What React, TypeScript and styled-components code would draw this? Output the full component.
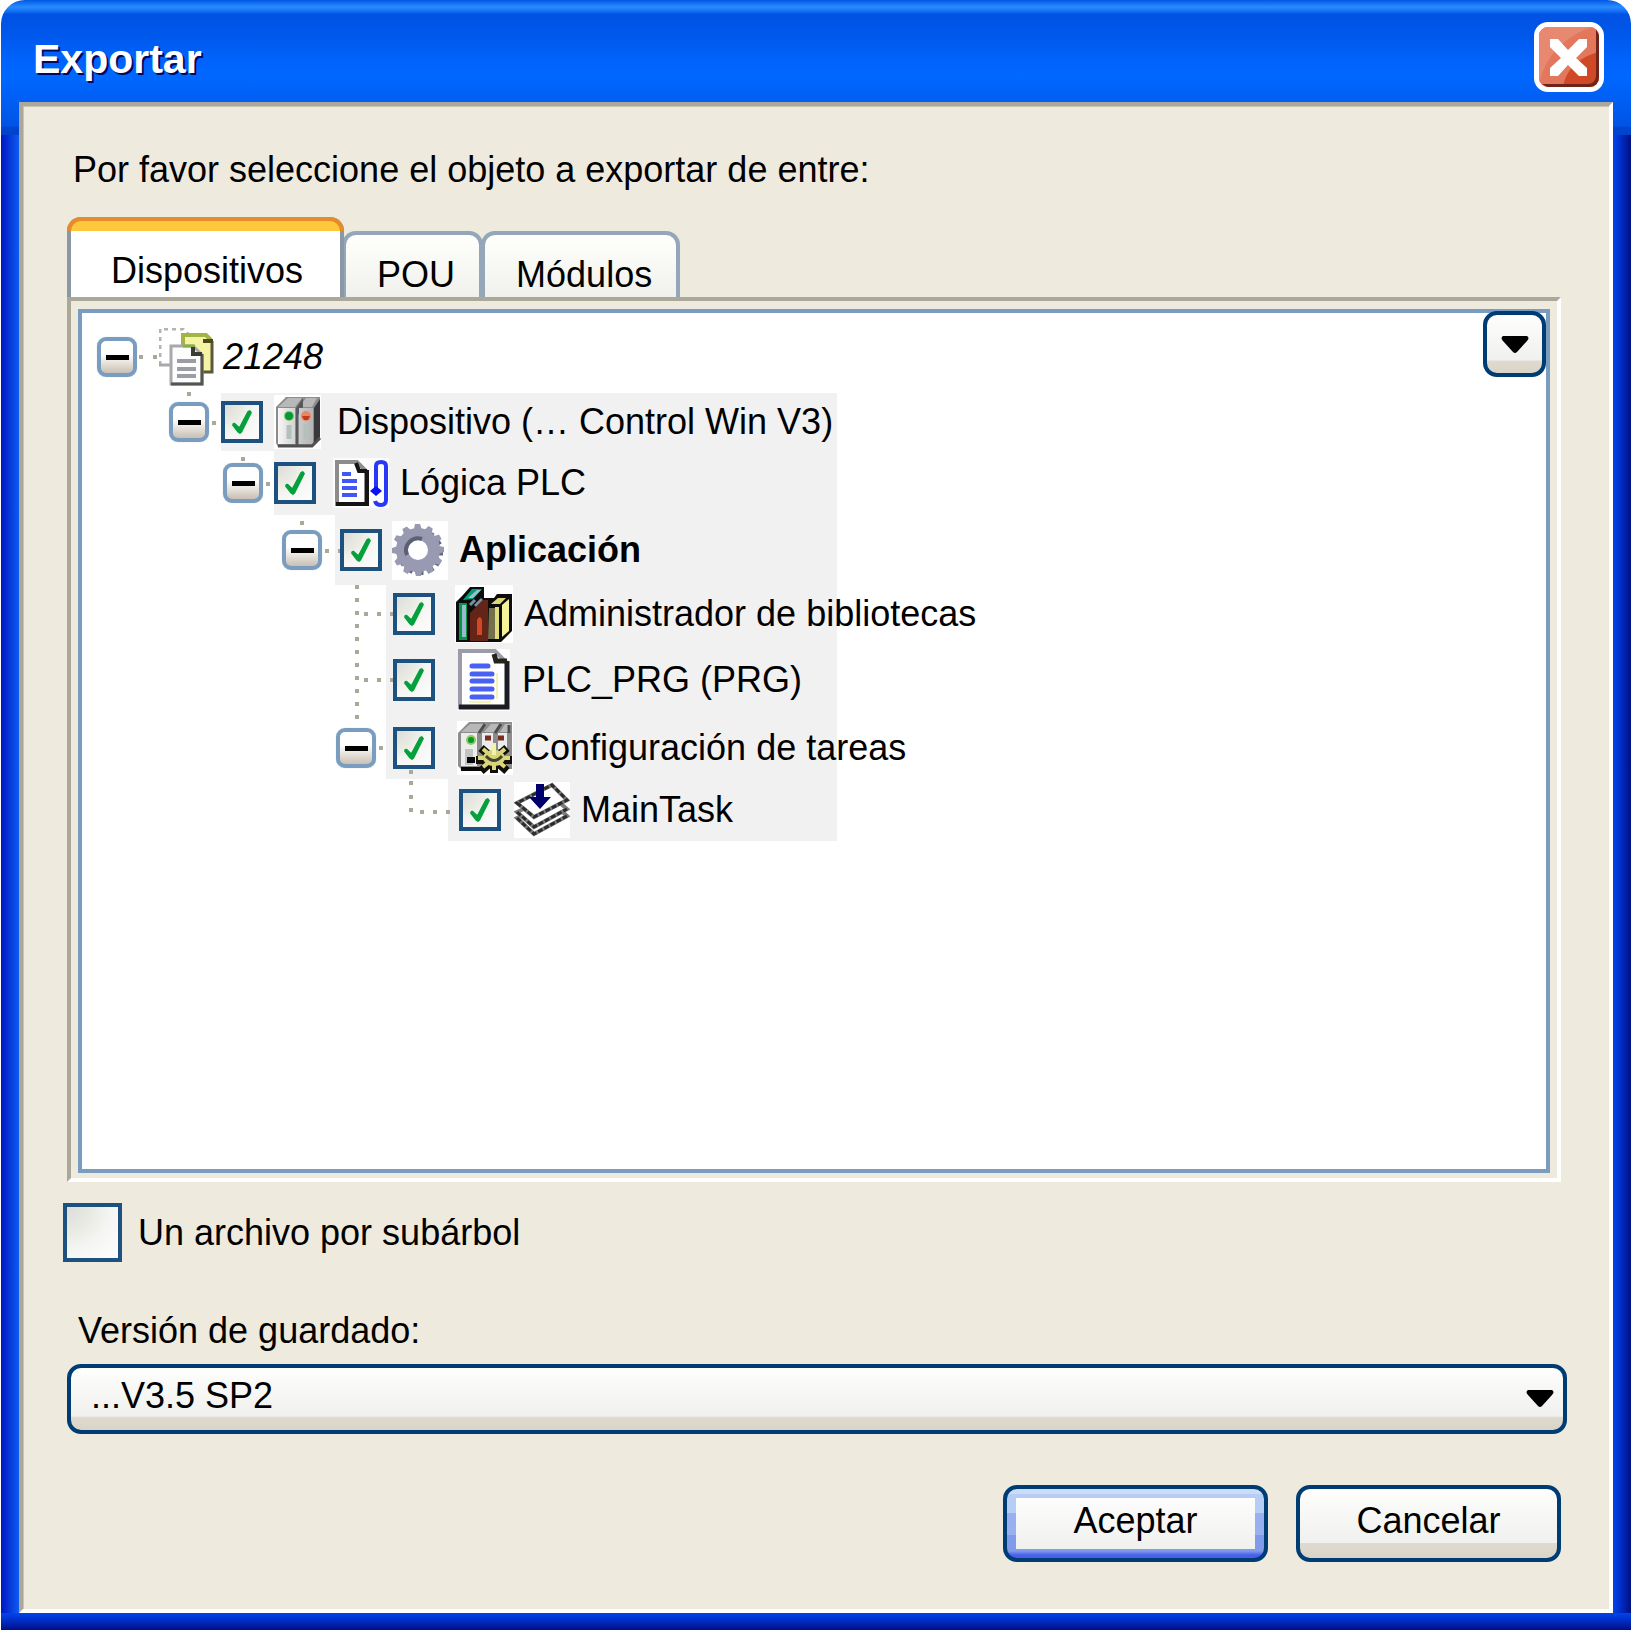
import React, { useState } from 'react';
import styled, { createGlobalStyle, css } from 'styled-components';

const NAVY = '#003c74';
const TAN = '#aca899';
const CREAM = '#eeeade';
const STEEL = '#7a9dbf';

const GlobalStyle = createGlobalStyle`
  *, *::before { box-sizing: border-box; }
  body {
    margin: 0;
    background: #fff;
    color: #000;
    font-family: "Liberation Sans Narrow", "Arial Narrow", "Liberation Sans", Arial, sans-serif;
    font-size: 36px;
    line-height: 52px;
  }
  button, input, select { font: inherit; color: inherit; margin: 0; }
`;

const Window = styled.main`
  display: flex;
  flex-direction: column;
  min-height: calc(100vh - 1px);
  margin: 0 0 1px 1px;
  padding: 0 18px 17px;
  border-radius: 24px 24px 0 0;
  background:
    linear-gradient(to bottom, #0058e6 0, #2a8cff 7px, #0f6af2 12px, #0052e2 14px, #0058ec 36px, #0062fa 58px, #0068ff 76px, #0060f6 96px, #0054e6 126px, #0046d2 127px, #0042cc 135px) top / 100% 135px no-repeat,
    linear-gradient(to bottom, #0044ee, #0024b4 60%, #000f8a) bottom / 100% 17px no-repeat,
    linear-gradient(to right, #0016c4, #0c5cf0) left / 18px 100% no-repeat,
    linear-gradient(to right, #0044ee, #0024b4 60%, #000f80) right / 18px 100% no-repeat;
`;

const TitleBar = styled.header`
  display: flex;
  align-items: center;
  justify-content: space-between;
  height: 102px;
  padding: 12px 9px 0 14px;
`;

const Title = styled.h1`
  margin: 0;
  padding-top: 4px;
  font-size: 41px;
  line-height: 60px;
  font-weight: bold;
  color: #fff;
  text-shadow: 2px 2px 0 #000a60;
`;

const CloseButton = styled.button`
  display: flex;
  width: 70px;
  height: 70px;
  padding: 0;
  overflow: hidden;
  border: 5px solid #fff;
  border-radius: 14px;
  background: #e2775c;
`;

const Client = styled.section`
  flex: 1;
  display: flex;
  flex-direction: column;
  padding: 38px 42px 47px 40px;
  border: 4px solid;
  border-color: ${TAN} #fff #fff ${TAN};
  box-shadow: inset 1px 1px 0 #c9c4b5;
  background: ${CREAM};
`;

const Prompt = styled.p`
  margin: 0 0 21px 10px;
`;

const Tabs = styled.div`
  display: flex;
  align-items: flex-end;
  height: 80px;
  margin-left: 4px;
`;

const Tab = styled.button<{ $active?: boolean }>`
  position: relative;
  padding: 0 24px 0 31px;
  height: 66px;
  display: flex;
  align-items: flex-end;
  margin-left: -2px;
  line-height: 44px;
  border: 4px solid #93a7b9;
  border-bottom: 0;
  border-radius: 14px 14px 0 0;
  background: linear-gradient(#fffffb, #f0f0ed);
  ${(p) => p.$active && css`
    z-index: 1;
    height: 80px;
    margin-left: 0;
    padding: 0 37px 4px 40px;
    border-color: #8a97a5;
    background: #fff;
    &::before {
      content: '';
      position: absolute;
      inset: -4px -4px auto;
      height: 14px;
      border: 4px solid #e68b2c;
      border-bottom: 0;
      border-radius: 14px 14px 0 0;
      background: #ffc83c;
    }
  `}
`;

const Panel = styled.div`
  flex: 1;
  display: flex;
  margin: 0 6px 0 4px;
  padding: 8px 7px 5px;
  border: 4px solid;
  border-color: ${TAN} #fff #fff ${TAN};
`;

const TreeBox = styled.div`
  position: relative;
  flex: 1;
  padding: 8px 1px;
  border: 4px solid ${STEEL};
  background: #fff;
`;

const face = css`
  border: 4px solid ${NAVY};
  border-radius: 14px;
  background: linear-gradient(#fffffd, #fafaf8 20%, #f0f1ee 78%, #dfdacf 79%, #dad3c8);
`;

const MenuButton = styled.button`
  ${face}
  position: absolute;
  top: -2px;
  right: 0;
  display: flex;
  align-items: center;
  justify-content: center;
  width: 63px;
  height: 66px;
  padding: 0;
`;

const Tree = styled.ul`
  position: relative;
  width: 754px;
  margin: 0;
  padding: 0;
  list-style: none;
`;

const Connectors = styled.svg`
  position: absolute;
  left: 0;
  top: 0;
  fill: none;
  stroke: ${TAN};
  stroke-width: 4;
`;

const Row = styled.li<{ $height: number }>`
  display: flex;
  align-items: center;
  height: ${(p) => p.$height}px;
`;

const Gutter = styled.div<{ $width: number; $gap: number }>`
  flex: none;
  display: flex;
  justify-content: flex-end;
  width: ${(p) => p.$width}px;
  padding-right: ${(p) => p.$gap}px;
`;

const Band = styled.div<{ $shaded: boolean; $pad: number }>`
  flex: 1;
  min-width: 0;
  align-self: stretch;
  display: flex;
  align-items: center;
  padding-left: ${(p) => p.$pad}px;
  background: ${(p) => (p.$shaded ? '#f1f1f1' : 'transparent')};
`;

const Expander = styled.button`
  display: flex;
  align-items: center;
  justify-content: center;
  width: 40px;
  height: 40px;
  padding: 0;
  border: 4px solid ${STEEL};
  border-radius: 9px;
  background: linear-gradient(#fff 40%, #e6e1da 70%, #c9bfb4);
  box-shadow: 0 0 1px #9fb8d4;
  &::before {
    content: '';
    width: 23px;
    height: 5px;
    background: #000;
  }
`;

const CheckBox = styled.input<{ $size: number }>`
  appearance: none;
  flex: none;
  display: grid;
  place-items: center;
  width: ${(p) => p.$size}px;
  height: ${(p) => p.$size}px;
  border: 4px solid #1c5180;
  background: radial-gradient(circle at 0 0, #dcdcdc, #e9ebe2 35%, #f5f5f4 60%, #fdfdfd);
  &:checked::before {
    content: '';
    width: 20px;
    height: 24px;
    background: #04a03c;
    clip-path: polygon(0 64%, 4% 54%, 14% 53%, 36% 70%, 78% 4%, 90% 0, 100% 10%, 50% 94%, 40% 100%, 28% 94%);
  }
`;

const NodeLabel = styled.label<{ $gap: number; $look?: 'bold' | 'italic' }>`
  display: flex;
  align-items: center;
  gap: ${(p) => (p.$look === 'italic' ? 8 : 11)}px;
  padding-left: ${(p) => p.$gap}px;
  white-space: nowrap;
  font-weight: ${(p) => (p.$look === 'bold' ? 'bold' : 'normal')};
  font-style: ${(p) => (p.$look === 'italic' ? 'italic' : 'normal')};
  svg { flex: none; }
`;

const OptionRow = styled.label`
  display: flex;
  align-items: center;
  gap: 16px;
  margin-top: 21px;
`;

const FieldLabel = styled.label`
  margin: 43px 0 7px 15px;
`;

const SelectWrap = styled.div`
  position: relative;
  display: flex;
  margin-left: 4px;
  svg {
    position: absolute;
    right: 13px;
    top: 26px;
    pointer-events: none;
  }
`;

const Select = styled.select`
  ${face}
  appearance: none;
  flex: 1;
  height: 70px;
  padding: 0 60px 6px 20px;
`;

const Actions = styled.footer`
  display: flex;
  justify-content: flex-end;
  gap: 28px;
  margin: 51px 6px 0 0;
`;

const Button = styled.button<{ $primary?: boolean }>`
  ${face}
  width: 265px;
  height: 77px;
  padding: 0 0 6px;
  ${(p) => p.$primary && css`
    background:
      linear-gradient(#fdfdfd, #f0f0ee) center / calc(100% - 18px) calc(100% - 18px) no-repeat,
      linear-gradient(#ccdcf8 0 5px, #b6cdf6 5px 24px, #98b0f0 24px 46px, #7f9bea 46px 62px, #4a60ea 66px);
  `}
`;

const Arrow = () => (
  <svg width="28" height="17" viewBox="0 0 28 17" aria-hidden="true">
    <path d="M2 0H26Q29 2 26 5L16 16Q14 18 12 16L2 5Q-1 2 2 0Z" fill="#000" />
  </svg>
);

const CloseGlyph = () => (
  <svg width="60" height="60" viewBox="0 0 60 60" aria-hidden="true">
    <rect width="60" height="60" fill="#e2775c" />
    <path d="M0 0H54C28 8 8 26 1 54L0 60Z" fill="#e68970" />
    <path d="M60 25C40 30 27 42 24 60H60Z" fill="#cf4927" />
    <path d="M57 2L60 8V50Q60 60 50 60H8L3 57H48Q57 57 57 48Z" fill="#6e241a" />
    <path d="M11 12H19L29 23L40 12H48V20L37 31L48 41V49H40L29 38L19 49H11V41L22 31L11 20Z" fill="#fff" />
  </svg>
);

const ProjectIcon = () => (
  <svg width="56" height="58" viewBox="0 0 56 58" aria-hidden="true">
    <path d="M1 37V1H24L30 7" fill="none" stroke="#b4b4b4" strokeWidth="3" strokeDasharray="4 4" />
    <path d="M0 37H12" stroke="#a8a8ac" strokeWidth="3" />
    <path d="M24 7H47L54 14V45H24Z" fill="#f5f3a4" />
    <path d="M24 18V7H47L52 12" fill="none" stroke="#a3b444" strokeWidth="4" />
    <path d="M53 13V44H43" fill="none" stroke="#5a5a38" strokeWidth="3" />
    <path d="M44 13H54" stroke="#4c4c20" strokeWidth="4" />
    <path d="M12 18H34L43 27V56H12Z" fill="#fdfdfd" stroke="#a8a8ac" strokeWidth="3" />
    <path d="M24 18H36" stroke="#86b040" strokeWidth="3" />
    <path d="M43 26V56H12" fill="none" stroke="#555550" strokeWidth="3" />
    <path d="M34 19V26H43" fill="none" stroke="#3c3c34" strokeWidth="4" />
    <path d="M18 33H37M18 41H37M18 48H37" stroke="#9c9ca4" strokeWidth="4" />
  </svg>
);

const DeviceIcon = () => (
  <svg width="56" height="54" viewBox="0 0 56 54" aria-hidden="true">
    <defs>
      <linearGradient id="metal">
        <stop offset="0" stopColor="#f6f6f6" />
        <stop offset="0.6" stopColor="#c8ccca" />
        <stop offset="1" stopColor="#b4b4b4" />
      </linearGradient>
    </defs>
    <path d="M4 0H51V54H4Z" fill="#fff" />
    <path d="M6 12L16 2H50V42L42 52H8L6 48Z" fill="#8c8c8c" />
    <path d="M8 12L18 3H32L25 12ZM29 12L36 3H47L42 12Z" fill="#b8b8b8" />
    <path d="M26 13L33 3V12L28 20V50H26Z" fill="#585858" />
    <path d="M8 13H25V49H8ZM29 13H43V49H29Z" fill="url(#metal)" />
    <path d="M44 13L50 4V42L44 50Z" fill="#38383c" />
    <path d="M19 30V44M36 30V44" stroke="#b4c0bc" strokeWidth="5" />
    <path d="M8 51H42L50 43" fill="none" stroke="#505050" strokeWidth="3" />
    <circle cx="19" cy="21" r="5" fill="#88c860" />
    <circle cx="19" cy="21" r="4" fill="#049838" />
    <circle cx="36" cy="21" r="5" fill="#ec8468" />
    <path d="M32 21H40L38 25H34Z" fill="#c03c18" />
  </svg>
);

const LogicIcon = () => (
  <svg width="56" height="50" viewBox="0 0 56 50" aria-hidden="true">
    <path d="M0 0H56V50H0Z" fill="#fcfcfd" />
    <path d="M4 4H24L33 13V46H4Z" fill="#fff" stroke="#8c8c8c" strokeWidth="4" />
    <path d="M34 12V46H3" fill="none" stroke="#141414" strokeWidth="4" />
    <path d="M23 5L26 13H34" fill="none" stroke="#141414" strokeWidth="4" />
    <path d="M9 16H18M9 23H24M9 30H24M9 37H24" stroke="#4258f4" strokeWidth="4" />
    <path d="M43 33V8Q43 4 48 4Q53 4 53 8V42Q53 47 48 47Q43 47 42 43" fill="none" stroke="#2838f8" strokeWidth="4" />
    <path d="M37 33L43 28L49 33L43 38Z" fill="#0c10f0" />
  </svg>
);

const TEETH = [0, 30, 60, 90, 120, 150, 180, 210, 240, 270, 300, 330];

const GearIcon = () => (
  <svg width="56" height="59" viewBox="0 0 56 59" aria-hidden="true">
    <path d="M0 0H56V59H0Z" fill="#fff" />
    {TEETH.map((angle) => (
      <path key={angle} d="M26 6V12" stroke="#666a7c" strokeWidth="7" transform={`translate(2 2) rotate(${angle} 26 29)`} />
    ))}
    {TEETH.map((angle) => (
      <path key={angle} d="M23 3H28L31 12H21Z" fill="#989ab4" transform={`rotate(${angle} 26 29)`} />
    ))}
    <circle cx="26" cy="29" r="16" fill="none" stroke="#989ab2" strokeWidth="12" />
    <path d="M15 34A12 12 0 0 1 30 18" fill="none" stroke="#5c6074" strokeWidth="4" />
  </svg>
);

const LibraryIcon = () => (
  <svg width="58" height="58" viewBox="0 0 58 58" aria-hidden="true">
    <path d="M0 0H58V58H0Z" fill="#fff" />
    <path d="M1 17L8 10L15 2H29V13H39L42 9H57V46L46 57H1Z" fill="#0c0c0c" />
    <path d="M4 18H12V55H4Z" fill="#04964c" />
    <path d="M7 20H11V52H7Z" fill="#9cb8cc" />
    <path d="M8 15L17 4H27L18 14Z" fill="#04a074" />
    <path d="M13 13L22 5H26L18 13Z" fill="#98c0d0" />
    <path d="M15 20L20 15M20 21L27 14" stroke="#7890a0" strokeWidth="3" />
    <path d="M15 28L28 15H33V56H15Z" fill="#642418" />
    <path d="M22 35Q25 29 27 35V50H22Z" fill="#d04824" />
    <path d="M34 23H40V54H33Z" fill="#74704c" />
    <path d="M40 22H44V54H40Z" fill="#e0dc7c" />
    <path d="M36 19L43 13H51L45 19Z" fill="#dcd878" />
    <path d="M47 20L54 14V46L47 52Z" fill="#f6f298" />
  </svg>
);

const ProgramIcon = () => (
  <svg width="56" height="62" viewBox="0 0 56 62" aria-hidden="true">
    <path d="M3 0H55V62H3Z" fill="#fdfdfd" />
    <path d="M5 2H40L52 14V58H5Z" fill="#fff" stroke="#9c9ca8" strokeWidth="4" />
    <path d="M52 12V58H4" fill="none" stroke="#1c1c24" strokeWidth="5" />
    <path d="M39 5L41 12H52" fill="none" stroke="#24241c" strokeWidth="5" />
    <path d="M17 17H33M17 25H37M17 32H37M17 40H37M17 48H37" stroke="#4860f4" strokeWidth="5" strokeLinecap="round" />
    <path d="M14 53H36M42 24V50" stroke="#f6f4b4" strokeWidth="2" />
  </svg>
);

const TaskConfigIcon = () => (
  <svg width="56" height="54" viewBox="0 0 56 54" aria-hidden="true">
    <path d="M0 0H56V54H0Z" fill="#fff" />
    <path d="M1 12L12 1H55V48H4L1 45Z" fill="#8c8c8c" />
    <path d="M4 11L13 3H30L22 11ZM27 11L34 3H42L38 11ZM43 11L48 3H54V11Z" fill="#b8b8b8" />
    <path d="M4 12H20V45H4ZM25 12H36V30H25ZM41 12H50V28H41Z" fill="#ececec" />
    <path d="M12 28V44" stroke="#c0c4c4" strokeWidth="8" />
    <path d="M22 12L28 3M38 12L44 3M52 12V4" stroke="#4c4c4c" strokeWidth="3" />
    <path d="M4 48H30" stroke="#080808" strokeWidth="4" />
    <circle cx="14" cy="19" r="5" fill="#90c860" />
    <circle cx="14" cy="19" r="3" fill="#04982c" />
    <path d="M28 17H34M41 17H47" stroke="#7c2c20" strokeWidth="5" />
    <g stroke="#101008" strokeWidth="8">
      <path d="M37 40V52M19 39H55M24 27L50 50M50 27L24 50" />
    </g>
    <g stroke="#dcd878" strokeWidth="4">
      <path d="M37 40V49M21 37H53M26 28L48 46M48 28L26 46" />
    </g>
    <ellipse cx="37" cy="37" rx="11" ry="8" fill="#d8d47c" />
    <path d="M29 35Q37 44 45 35" fill="none" stroke="#44442c" strokeWidth="3" />
    <path d="M37 22V34" stroke="#f4f2a8" strokeWidth="4" />
    <path d="M10 36H18V42H10Z" fill="#080808" />
  </svg>
);

const TaskIcon = () => (
  <svg width="56" height="56" viewBox="0 0 56 56" aria-hidden="true">
    <path d="M0 0H56V56H0Z" fill="#fff" />
    <g fill="#fff" stroke="#7c7c7c" strokeWidth="4">
      <path d="M3 36L20 52L53 34L38 20Z" />
      <path d="M3 30L20 45L53 27L38 14Z" />
      <path d="M3 21L20 35L53 18L38 3Z" />
    </g>
    <g fill="none" stroke="#2c2c2c" strokeWidth="3" strokeDasharray="5 2">
      <path d="M3 36L20 52L53 34" />
      <path d="M3 30L20 45L53 27" />
      <path d="M3 21L20 35L53 18L38 3Z" />
    </g>
    <path d="M22 2H30V15H37L26 27L15 15H22Z" fill="#00006c" />
  </svg>
);

type TreeNode = {
  id: string;
  label: string;
  Icon: () => React.ReactElement;
  height: number;
  gutter: number;
  expander?: number;
  pad: number;
  gap: number;
  look?: 'bold' | 'italic';
  plain?: boolean;
};

const nodes: TreeNode[] = [
  { id: 'project', label: '21248', Icon: ProjectIcon, height: 72, gutter: 76, expander: 22, pad: 0, gap: 0, look: 'italic', plain: true },
  { id: 'device', label: 'Dispositivo (… Control Win V3)', Icon: DeviceIcon, height: 58, gutter: 138, expander: 12, pad: 0, gap: 7 },
  { id: 'logic', label: 'Lógica PLC', Icon: LogicIcon, height: 64, gutter: 191, expander: 11, pad: 0, gap: 17 },
  { id: 'app', label: 'Aplicación', Icon: GearIcon, height: 70, gutter: 252, expander: 13, pad: 5, gap: 10, look: 'bold' },
  { id: 'library', label: 'Administrador de bibliotecas', Icon: LibraryIcon, height: 58, gutter: 303, pad: 7, gap: 20 },
  { id: 'program', label: 'PLC_PRG (PRG)', Icon: ProgramIcon, height: 74, gutter: 303, pad: 7, gap: 20 },
  { id: 'config', label: 'Configuración de tareas', Icon: TaskConfigIcon, height: 62, gutter: 303, expander: 10, pad: 7, gap: 22 },
  { id: 'task', label: 'MainTask', Icon: TaskIcon, height: 62, gutter: 365, pad: 11, gap: 13 },
];

const TreeRow = ({ node }: { node: TreeNode }) => {
  const [checked, setChecked] = useState(true);
  const { Icon } = node;
  return (
    <Row $height={node.height}>
      <Gutter $width={node.gutter} $gap={node.expander ?? 0}>
        {node.expander !== undefined && <Expander type="button" aria-label={`Contraer ${node.label}`} />}
      </Gutter>
      <Band $shaded={!node.plain} $pad={node.pad}>
        {!node.plain && (
          <CheckBox id={node.id} type="checkbox" $size={42} checked={checked} onChange={() => setChecked(!checked)} />
        )}
        <NodeLabel as={node.plain ? 'span' : 'label'} htmlFor={node.plain ? undefined : node.id} $gap={node.gap} $look={node.look}>
          <Icon />
          {node.label}
        </NodeLabel>
      </Band>
    </Row>
  );
};

export default function App() {
  return (
    <>
      <GlobalStyle />
      <Window>
        <TitleBar>
          <Title>Exportar</Title>
          <CloseButton type="button" aria-label="Cerrar"><CloseGlyph /></CloseButton>
        </TitleBar>
        <Client>
          <Prompt>Por favor seleccione el objeto a exportar de entre:</Prompt>
          <Tabs role="tablist">
            <Tab type="button" role="tab" aria-selected="true" $active>Dispositivos</Tab>
            <Tab type="button" role="tab" aria-selected="false">POU</Tab>
            <Tab type="button" role="tab" aria-selected="false">Módulos</Tab>
          </Tabs>
          <Panel>
            <TreeBox>
              <Tree>
                <Connectors width="400" height="524" viewBox="0 0 400 524" aria-hidden="true">
                  <path d="M56 36H60M70 36H74M104 73H108M129 102H133M158 138H162M183 163H187M217 202H221M242 230H246M255 230H257" />
                  <path d="M274 264V404" strokeDasharray="4 9" />
                  <path d="M281 293H310M281 359H310" strokeDasharray="4 9" />
                  <path d="M296 427H300M328 449V453M328 460V464M328 474V478M328 487V491" />
                  <path d="M337 491H370" strokeDasharray="4 9" />
                </Connectors>
                {nodes.map((node) => <TreeRow key={node.id} node={node} />)}
              </Tree>
              <MenuButton type="button" aria-label="Opciones"><Arrow /></MenuButton>
            </TreeBox>
          </Panel>
          <OptionRow>
            <CheckBox type="checkbox" $size={59} />
            Un archivo por subárbol
          </OptionRow>
          <FieldLabel htmlFor="version">Versión de guardado:</FieldLabel>
          <SelectWrap>
            <Select id="version" defaultValue="sp2">
              <option value="sp2">...V3.5 SP2</option>
            </Select>
            <Arrow />
          </SelectWrap>
          <Actions>
            <Button type="button" $primary>Aceptar</Button>
            <Button type="button">Cancelar</Button>
          </Actions>
        </Client>
      </Window>
    </>
  );
}
